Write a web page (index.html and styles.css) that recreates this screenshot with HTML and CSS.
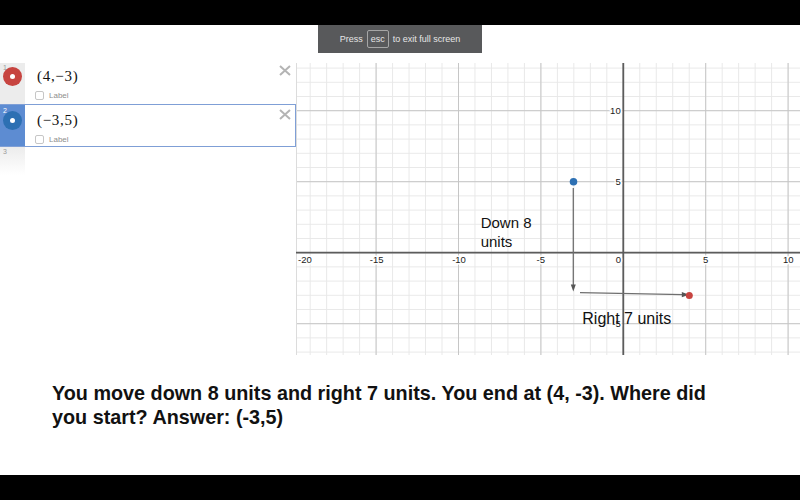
FILE: index.html
```html
<!DOCTYPE html>
<html lang="en">
<head>
<meta charset="utf-8">
<title>Graph</title>
<link rel="stylesheet" href="styles.css">
</head>
<body>
<div class="bar"></div>
<main class="stage">
  <div class="toast"><span>Press</span><span class="key">esc</span><span>to exit full screen</span></div>
  <div class="calc">
    <aside class="panel">
      <div class="expr">
        <div class="gutter"><span class="num">1</span><span class="icon red"></span></div>
        <div class="content">
          <div class="math">(4,−3)</div>
          <div class="lbl"><span class="box"></span>Label</div>
        </div>
        <svg class="close" width="12" height="11" viewBox="0 0 12 11"><path d="M1 1L11 10M11 1L1 10"/></svg>
      </div>
      <div class="expr sel">
        <div class="gutter"><span class="num">2</span><span class="icon blue"></span></div>
        <div class="content">
          <div class="math">(−3,5)</div>
          <div class="lbl"><span class="box"></span>Label</div>
        </div>
        <svg class="close" width="12" height="11" viewBox="0 0 12 11"><path d="M1 1L11 10M11 1L1 10"/></svg>
      </div>
      <div class="expr empty">
        <div class="gutter"><span class="num">3</span></div>
      </div>
    </aside>
    <div class="graph">
      <svg class="plane" width="504" height="292" viewBox="0 0 504 292">
        <defs>
          <pattern id="minor" patternUnits="userSpaceOnUse" x="326.8" y="189.2" width="16.48" height="14.2">
            <path class="gminor" d="M0.5 0V14.2M0 0.5H16.48"/>
          </pattern>
          <pattern id="major" patternUnits="userSpaceOnUse" x="326.8" y="189.2" width="82.4" height="71">
            <path class="gmajor" d="M0.5 0V71M0 0.5H82.4"/>
          </pattern>
        </defs>
        <rect width="504" height="292" fill="#fff"/>
        <rect width="504" height="292" fill="url(#minor)"/>
        <rect width="504" height="292" fill="url(#major)"/>
        <path class="edge" d="M0.5 0V292"/>
        <path class="axis" d="M0 189.7H504M327.3 0V292"/>
        <text class="tick" x="2" y="199.5">-20</text>
        <text class="tick mid" x="80.6" y="199.5">-15</text>
        <text class="tick mid" x="163" y="199.5">-10</text>
        <text class="tick mid" x="244.8" y="199.5">-5</text>
        <text class="tick end" x="325" y="199.5">0</text>
        <text class="tick mid" x="409.7" y="199.5">5</text>
        <text class="tick mid" x="492.3" y="199.5">10</text>
        <text class="tick end" x="324.7" y="51.2">10</text>
        <text class="tick end" x="324.7" y="122.2">5</text>
        <text class="tick end" x="324.7" y="264.2">-5</text>
        <path class="arrow" d="M277.3 125V223"/>
        <polygon class="head" points="274.8,221.5 279.8,221.5 277.3,228.5"/>
        <path class="arrow" d="M284 229.7L387 231.6"/>
        <polygon class="head" points="385.8,229 385.8,234.2 393,231.8"/>
        <circle cx="277.5" cy="118.7" r="3.8" fill="#2d70b3"/>
        <circle cx="393.3" cy="232.5" r="3.5" fill="#c74440"/>
        <text class="note" x="184.7" y="165.3">Down 8</text>
        <text class="note" x="184.7" y="183.7">units</text>
        <text class="note big" x="286.3" y="261.3">Right 7 units</text>
      </svg>
    </div>
  </div>
  <p class="question">You move down 8 units and right 7 units. You end at (4, -3). Where did you start? Answer: (-3,5)</p>
</main>
<div class="bar"></div>
</body>
</html>
```

FILE: styles.css
```css
* { box-sizing: border-box; margin: 0; padding: 0; }
html, body { width: 800px; height: 500px; overflow: hidden; background: #fff; }
body { font-family: "Liberation Sans", Arial, sans-serif; display: flex; flex-direction: column; }

.bar { height: 25px; background: #000; flex: none; }

.stage { position: relative; height: 450px; flex: none; display: flex; flex-direction: column; }

.toast {
  position: absolute; left: 318px; top: 0; width: 164px; height: 28px;
  background: #58595b; color: #e6e6e6; font-size: 9px;
  display: flex; align-items: center; justify-content: center; gap: 4px;
}
.key { border: 1px solid #a6a6a6; border-radius: 2px; height: 18px; padding: 0 3px; display: flex; align-items: center; }

.calc { display: flex; height: 292px; margin-top: 38px; flex: none; }
.panel { width: 296px; flex: none; display: flex; flex-direction: column; }

.expr { display: flex; height: 41px; flex: none; align-items: flex-start; }
.expr.sel { height: 43px; border: 1px solid #7f9fd6; border-left: 0; width: 296px; }
.gutter {
  width: 25px; flex: none; align-self: stretch; background: #ececec;
  position: relative; display: flex; justify-content: center; padding-top: 2px;
}
.sel .gutter { background: #5d8cd2; padding-top: 4px; }
.num { position: absolute; left: 3px; top: 1px; font-size: 7px; line-height: 7px; color: #9a9a9a; }
.sel .num { color: #fff; top: 2px; }

.icon { width: 19px; height: 19px; border-radius: 50%; margin-top: 1.5px; display: flex; align-items: center; justify-content: center; }
.icon::after { content: ""; width: 5px; height: 5px; border-radius: 50%; background: #fff; }
.icon.red { background: #c74440; }
.icon.blue { background: #2d70b3; }

.content { flex: 1; padding: 2px 0 0 10px; }
.sel .content { padding-top: 4px; }
.math {
  margin: 3px 0 0 2px; font-family: "Liberation Serif", "Times New Roman", serif;
  font-size: 15px; line-height: 17px; letter-spacing: 0.7px; color: #111;
}
.lbl { margin-top: 6px; display: flex; align-items: flex-start; font-size: 8px; line-height: 9px; color: #8e8e8e; }
.box { width: 9px; height: 9px; border: 1px solid #c6c6c6; border-radius: 2px; margin-right: 5px; background: #fff; }

.close { margin: 2px 5px 0 0; flex: none; }
.sel .close { margin: 4px 4px 0 0; }
.close path { stroke: #b4b4b4; stroke-width: 2; fill: none; }

.expr.empty { height: 28px; }
.empty .gutter { background: linear-gradient(#ececec, #fff); }

.graph { flex: 1; }
.plane { display: block; }
.gminor { stroke: #e8e8e8; stroke-width: 1; fill: none; }
.gmajor { stroke: #c6c6c6; stroke-width: 1; fill: none; }
.edge { stroke: #dcdcdc; stroke-width: 1; }
.axis { stroke: #5c5c5c; stroke-width: 1.8; fill: none; }
.tick {
  font-family: "Liberation Sans", Arial, sans-serif; font-size: 9.5px; fill: #222;
  stroke: #fff; stroke-width: 3px; paint-order: stroke; stroke-linejoin: round;
}
.tick.mid { text-anchor: middle; }
.tick.end { text-anchor: end; }
.arrow { stroke: #6f6f6f; stroke-width: 1.3; fill: none; }
.head { fill: #555; }
.note { font-family: "Liberation Sans", Arial, sans-serif; font-size: 15px; fill: #111; }
.note.big { font-size: 16px; }

.question {
  margin: 27px 0 0 52px; width: 690px;
  font-family: "Liberation Sans", Arial, sans-serif; font-weight: bold;
  font-size: 19.8px; line-height: 23.5px; color: #111;
}
```
